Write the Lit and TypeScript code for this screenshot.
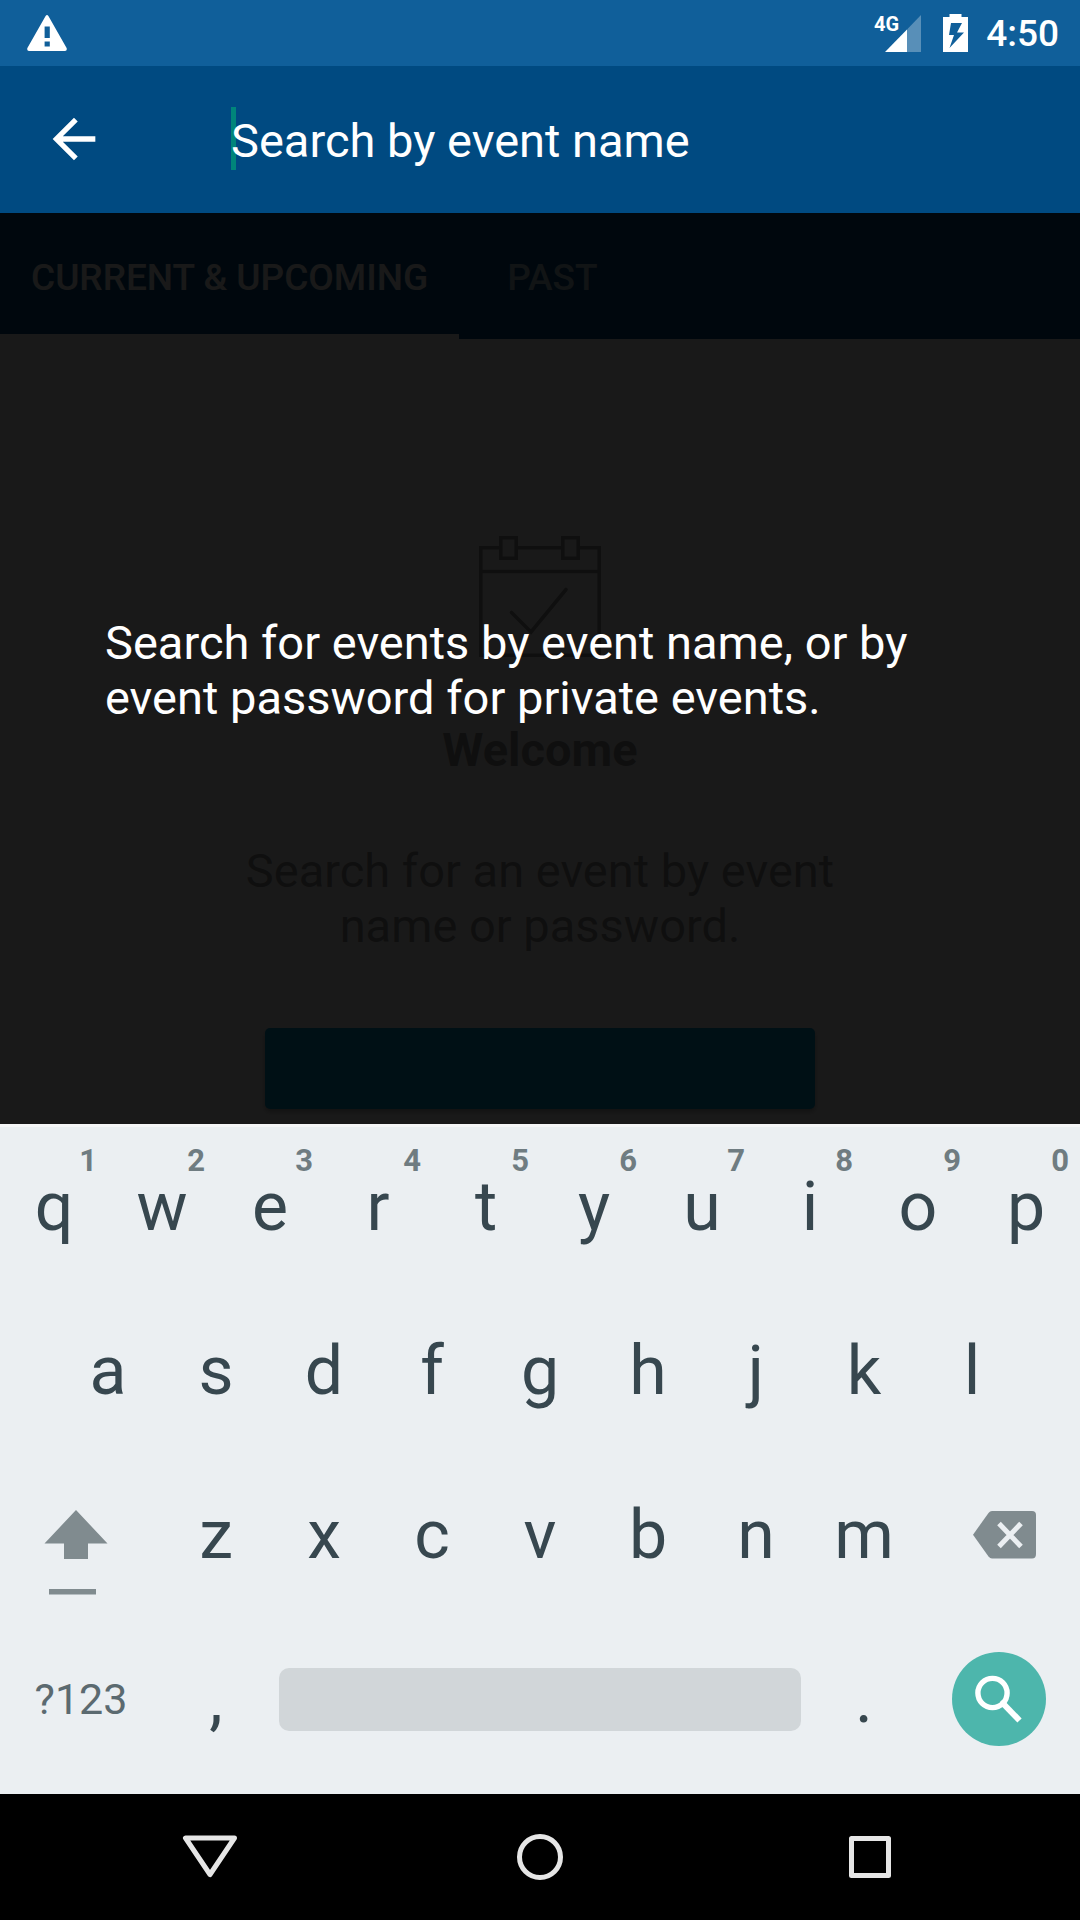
import { LitElement, html, css, svg, nothing } from "lit";
import { customElement, property } from "lit/decorators.js";

@customElement("status-bar")
class StatusBar extends LitElement {
  static styles = css`
    :host {
      display: flex;
      align-items: center;
      justify-content: space-between;
      height: 66px;
      padding: 0 21px 0 27px;
      background: #105f9a;
      color: #fff;
    }
    svg {
      display: block;
    }
    .right {
      display: flex;
      align-items: center;
    }
    .network {
      align-self: flex-start;
      font-size: 20px;
      line-height: 24px;
      font-weight: 700;
      margin-right: -14px;
      padding-top: 2px;
    }
    .signal {
      margin-right: 22px;
    }
    .battery {
      margin-right: 18px;
    }
    .time {
      font-size: 37px;
      line-height: 44px;
      font-weight: 500;
      padding-top: 2px;
    }
  `;
  render() {
    return html`
      <svg width="40" height="36" viewBox="0 0 40 36" role="img" aria-label="Warning">
        <path
          fill="#fff"
          fill-rule="evenodd"
          d="M18.6 1Q20 -1 21.4 1L39.6 33Q40.4 35.6 38 36H2Q-.4 35.6 .4 33ZM17.6 11.5V23h5.2V11.5ZM17.6 26.5V31.5h5.2V26.5Z"
        />
      </svg>
      <div class="right">
        <span class="network">4G</span>
        <svg class="signal" width="36" height="37" viewBox="0 0 36 37" role="img" aria-label="Signal">
          <path fill="#fff" fill-opacity=".3" d="M22 14.400L36 0V37H22Z" />
          <path fill="#fff" d="M22 14.400V37H0Z" />
        </svg>
        <svg class="battery" width="25" height="38" viewBox="0 0 25 38" role="img" aria-label="Battery charging">
          <path
            fill="#fff"
            fill-rule="evenodd"
            d="M6.500 0H18.500V3H25V38H0V3H6.500ZM8 9L6 21H11L6.500 34L21 18.500H14L19 9Z"
          />
        </svg>
        <span class="time">4:50</span>
      </div>
    `;
  }
}

@customElement("search-bar")
class SearchBar extends LitElement {
  static styles = css`
    :host {
      display: flex;
      align-items: center;
      min-height: 147px;
      padding: 0 44px 2px 42px;
      box-sizing: border-box;
      background: #004a81;
    }
    .back {
      flex: none;
      width: 64px;
      height: 64px;
      padding: 0;
      margin-right: 125px;
      border: 0;
      background: none;
    }
    svg {
      display: block;
    }
    .field {
      flex: 1;
      min-width: 0;
      height: 63px;
      box-sizing: border-box;
      padding: 4px 0 0;
      border: 0;
      outline: 0;
      background: linear-gradient(#00857a, #00857a) 0 0 / 5px 100% no-repeat;
      color: #fff;
      font: 400 47px/56px Roboto, sans-serif;
    }
    .field::placeholder {
      color: #fff;
      opacity: 1;
    }
  `;
  render() {
    return html`
      <button class="back" aria-label="Back">
        <svg width="64" height="64" viewBox="0 0 24 24">
          <path fill="#fff" d="M20 11H7.800l5.600-5.600L12 4l-8 8 8 8 1.400-1.400L7.800 13H20z" />
        </svg>
      </button>
      <input class="field" type="text" placeholder="Search by event name" aria-label="Search by event name" />
    `;
  }
}

@customElement("event-list")
class EventList extends LitElement {
  static styles = css`
    :host {
      display: flex;
      flex-direction: column;
      flex: 1;
      position: relative;
      background: #fff;
    }
    .tabs {
      display: flex;
      background: #004a81;
    }
    .tab {
      height: 126px;
      box-sizing: border-box;
      padding: 8px 31px 0;
      border: 0;
      border-bottom: 5px solid transparent;
      background: none;
      color: rgba(255, 255, 255, 0.7);
      font: 500 37px/44px Roboto, sans-serif;
    }
    .tab:last-child {
      padding: 8px 48px 0;
    }
    .tab.active {
      border-bottom-color: #fff;
      color: #fff;
    }
    .welcome {
      display: flex;
      flex-direction: column;
      align-items: center;
      padding: 197px 200px 14px;
      text-align: center;
      color: #999;
      font-size: 47px;
      line-height: 55px;
    }
    svg {
      display: block;
    }
    h1 {
      margin: 65px 0 66px;
      font-size: 47px;
      line-height: 55px;
      font-weight: 700;
    }
    p {
      margin: 0;
    }
    .prompt {
      max-width: 620px;
    }
    .find {
      width: 550px;
      height: 81px;
      margin-top: 75px;
      border: 0;
      border-radius: 5px;
      background: #00a0d2;
      box-shadow: 0 3px 5px rgba(0, 0, 0, 0.3);
    }
    .scrim {
      position: absolute;
      inset: 0;
      display: flex;
      align-items: center;
      padding: 2px 105px 0;
      background: rgba(0, 0, 0, 0.9);
      color: #fff;
      font-size: 47px;
      line-height: 55px;
    }
  `;
  render() {
    return html`
      <div class="tabs" role="tablist">
        <button class="tab active" role="tab" aria-selected="true">CURRENT &amp; UPCOMING</button>
        <button class="tab" role="tab" aria-selected="false">PAST</button>
      </div>
      <div class="welcome">
        <svg width="122" height="121" viewBox="0 0 122 121" fill="none" stroke="#999" stroke-width="3.600">
          <path d="M20 11.800H1.800V119.200H120.200V11.800H101M39 11.800H82M2 35.500H120" />
          <path d="M21.800 1.800H37.200V22.200H21.800ZM83.800 1.800H99.200V22.200H83.800Z" />
          <path stroke-linecap="round" d="M32.500 76.500L52 96L87 53.500" />
        </svg>
        <h1>Welcome</h1>
        <p class="prompt">Search for an event by event name or password.</p>
        <button class="find" aria-label="Find event"></button>
      </div>
      <div class="scrim">
        <p>Search for events by event name, or by event password for private events.</p>
      </div>
    `;
  }
}

@customElement("soft-keyboard")
class SoftKeyboard extends LitElement {
  static styles = css`
    :host {
      display: block;
      padding: 1px 0 13px;
      background: #ebeff2;
      box-shadow: inset 0 3px #f5f6f7;
    }
    .row {
      display: grid;
      grid-template-columns: repeat(20, 1fr);
      height: 164px;
    }
    .key {
      position: relative;
      grid-column: span 2;
      display: flex;
      align-items: center;
      justify-content: center;
      padding: 0;
      border: 0;
      background: none;
      color: #37474f;
      font: 400 68px/80px Roboto, sans-serif;
    }
    .row.inset .key:first-child {
      grid-column: 2 / span 2;
    }
    .hint {
      position: absolute;
      top: 18px;
      right: 11px;
      color: #6f7c81;
      font-size: 31px;
      line-height: 36px;
      font-weight: 700;
    }
    .key.wide {
      grid-column: span 3;
    }
    .key.mode {
      color: #5b6a70;
      font-size: 43px;
    }
    .key.shift {
      padding-right: 11px;
    }
    .key.delete {
      padding-left: 10px;
    }
    .key.space {
      grid-column: span 10;
      padding: 0 9px;
    }
    .bar {
      flex: 1;
      height: 63px;
      border-radius: 10px;
      background: #d1d6d9;
    }
    svg {
      display: block;
    }
  `;
  private key(letter: string, hint?: string) {
    return html`<button class="key">${letter}${hint ? html`<span class="hint">${hint}</span>` : nothing}</button>`;
  }
  render() {
    return html`
      <div class="row">${[..."qwertyuiop"].map((c, i) => this.key(c, String((i + 1) % 10)))}</div>
      <div class="row inset">${[..."asdfghjkl"].map((c) => this.key(c))}</div>
      <div class="row">
        <button class="key wide shift" aria-label="Shift">
          <svg width="64" height="136" viewBox="0 0 64 136" fill="#808b8f">
            <path d="M32 43L63.500 76.500H44V92H20V76.500H.5ZM5 122H52V127.500H5Z" />
          </svg>
        </button>
        ${[..."zxcvbnm"].map((c) => this.key(c))}
        <button class="key wide delete" aria-label="Delete">
          <svg width="63" height="48" viewBox="0 0 63 48">
            <path
              fill="#808b8f"
              d="M19 0H59Q63 0 63 4V43Q63 47.500 59 47.500H19Q17 47.500 15.500 45.500L0 23.700L15.500 2Q17 0 19 0Z"
            />
            <path stroke="#ebeff2" stroke-width="5" d="M26 12.500L48 35.500M48 12.500L26 35.500" />
          </svg>
        </button>
      </div>
      <div class="row">
        <button class="key wide mode">?123</button>
        ${this.key(",")}
        <button class="key space" aria-label="Space"><span class="bar"></span></button>
        ${this.key(".")}
        <button class="key wide" aria-label="Search">
          <svg width="94" height="94" viewBox="0 0 94 94" fill="none" stroke="#fff">
            <circle cx="47" cy="47" r="47" fill="#4db6ac" stroke="none" />
            <circle cx="40.500" cy="41" r="14.600" stroke-width="5.400" />
            <path stroke-width="6" d="M52 52.500L67.500 68.500" />
            <path stroke-width="3" d="M49 49L54 54" />
          </svg>
        </button>
      </div>
    `;
  }
}

@customElement("nav-bar")
class NavBar extends LitElement {
  static styles = css`
    :host {
      display: flex;
      justify-content: center;
      gap: 220px;
      background: #000;
    }
    .nav {
      display: flex;
      align-items: center;
      justify-content: center;
      width: 110px;
      height: 126px;
      padding: 0;
      border: 0;
      background: none;
    }
    svg {
      display: block;
    }
  `;
  @property({ attribute: false }) items = [
    { label: "Back", shape: svg`<path d="M5.500 11H54.500L30 47.500Z" />` },
    { label: "Home", shape: svg`<circle cx="30" cy="30" r="20.500" />` },
    { label: "Overview", shape: svg`<rect x="11.500" y="11.500" width="37" height="37" />` },
  ];
  render() {
    return this.items.map(
      (item) => html`
        <button class="nav" aria-label=${item.label}>
          <svg width="60" height="60" viewBox="0 0 60 60" fill="none" stroke="#e6e6e6" stroke-width="5" stroke-linejoin="round">
            ${item.shape}
          </svg>
        </button>
      `
    );
  }
}

@customElement("app-root")
class AppRoot extends LitElement {
  static styles = css`
    :host {
      display: flex;
      flex-direction: column;
      min-height: 100vh;
      font-family: Roboto, sans-serif;
    }
  `;
  render() {
    return html`
      <status-bar></status-bar>
      <search-bar></search-bar>
      <event-list></event-list>
      <soft-keyboard></soft-keyboard>
      <nav-bar></nav-bar>
    `;
  }
}
